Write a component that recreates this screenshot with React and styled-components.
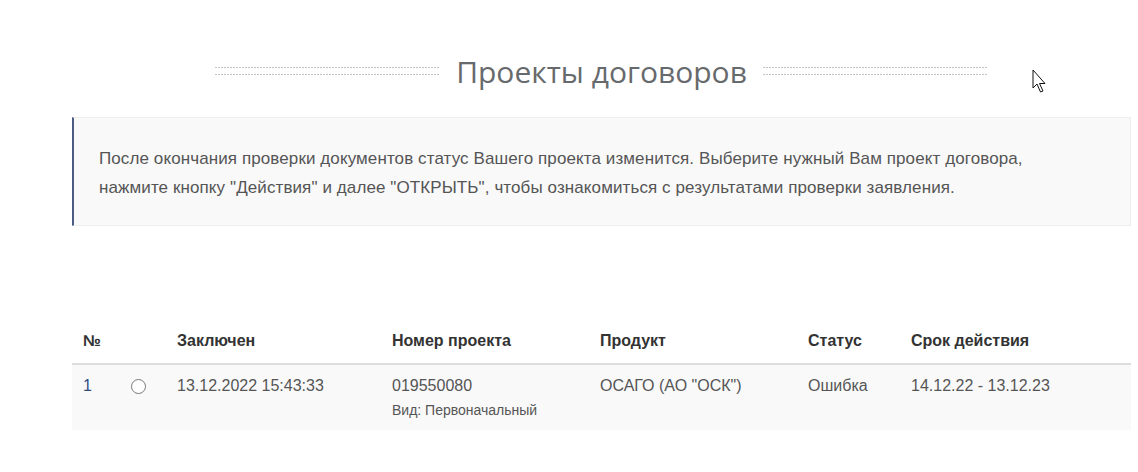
import React from "react";
import styled, { createGlobalStyle } from "styled-components";

const GlobalStyle = createGlobalStyle`
  html, body {
    margin: 0;
    padding: 0;
    background: #fff;
  }
  body {
    font-family: "Liberation Sans", Arial, sans-serif;
    color: #555;
  }
`;

const Page = styled.div`
  position: relative;
  width: 1138px;
  height: 472px;
  overflow: hidden;
  box-sizing: border-box;
  padding: 51px 7px 0 72px;
`;

const TitleRow = styled.div`
  display: flex;
  align-items: center;
  justify-content: center;
  gap: 16px;
  height: 42px;
`;

const Dots = styled.div`
  width: 225px;
  height: 8px;
  background-image:
    repeating-linear-gradient(to right, #c4c4c4 0 2px, transparent 2px 3px),
    repeating-linear-gradient(to right, #c4c4c4 0 2px, transparent 2px 3px);
  background-size: 100% 1px, 100% 1px;
  background-position: 0 0, 0 100%;
  background-repeat: no-repeat;
  margin-top: -2px;
`;

const Title = styled.h1`
  margin: 0;
  font-family: "Open Sans", sans-serif;
  font-weight: 400;
  font-size: 30px;
  line-height: 42px;
  color: #676a6c;
`;

const Notice = styled.div`
  margin-top: 24px;
  background: #f9f9f9;
  border: 1px solid #eee;
  border-left: 2px solid #4c5d85;
  padding: 26px 28px 23px 25px;
  font-size: 17px;
  letter-spacing: 0.1px;
  line-height: 29px;
  color: #555;
`;

const Table = styled.table`
  margin-top: 93px;
  width: 100%;
  table-layout: fixed;
  border-collapse: collapse;
  font-size: 16px;
  color: #555;
`;

const Th = styled.th`
  box-sizing: border-box;
  text-align: left;
  font-weight: 700;
  font-size: 16px;
  color: #333;
  padding: 11px 11px;
  line-height: 22px;
  border-bottom: 2px solid #ddd;
  width: ${(p) => p.$w}px;
`;

const Tr = styled.tr`
  background: #f9f9f9;
`;

const Td = styled.td`
  vertical-align: top;
  padding: 10px 11px 11px;
  line-height: 22px;
  color: ${(p) => (p.$accent ? "#2f4e82" : "#555")};
`;

const Radio = styled.span`
  display: inline-block;
  width: 13px;
  height: 13px;
  margin-top: 4px;
  border: 1px solid #777;
  border-radius: 50%;
  background: #fff;
`;

const Sub = styled.div`
  margin-top: 4px;
  font-size: 14px;
  line-height: 18px;
  color: #555;
`;

const Cursor = styled.svg`
  position: absolute;
  left: 1032px;
  top: 69px;
`;

const columns = [
  { label: "№", w: 48 },
  { label: "", w: 46 },
  { label: "Заключен", w: 215 },
  { label: "Номер проекта", w: 208 },
  { label: "Продукт", w: 208 },
  { label: "Статус", w: 103 },
  { label: "Срок действия", w: 231 },
];

export default function App() {
  return (
    <Page>
      <GlobalStyle />
      <TitleRow>
        <Dots />
        <Title>Проекты договоров</Title>
        <Dots />
      </TitleRow>

      <Notice>
        После окончания проверки документов статус Вашего проекта изменится. Выберите нужный Вам проект договора,
        <br />
        нажмите кнопку "Действия" и далее "ОТКРЫТЬ", чтобы ознакомиться с результатами проверки заявления.
      </Notice>

      <Table>
        <thead>
          <tr>
            {columns.map((c, i) => (
              <Th key={i} $w={c.w}>
                {c.label}
              </Th>
            ))}
          </tr>
        </thead>
        <tbody>
          <Tr>
            <Td $accent>1</Td>
            <Td>
              <Radio />
            </Td>
            <Td>13.12.2022 15:43:33</Td>
            <Td>
              019550080
              <Sub>Вид: Первоначальный</Sub>
            </Td>
            <Td>ОСАГО (АО "ОСК")</Td>
            <Td>Ошибка</Td>
            <Td>14.12.22 - 13.12.23</Td>
          </Tr>
        </tbody>
      </Table>

      <Cursor width="16" height="26" viewBox="0 0 16 26">
        <path
          d="M1 1 L1 19 L5 15 L8.5 23 L11 22 L7.5 14.5 L13 14.5 Z"
          fill="#fff"
          stroke="#111"
          strokeWidth="1"
          strokeLinejoin="miter"
        />
      </Cursor>
    </Page>
  );
}
